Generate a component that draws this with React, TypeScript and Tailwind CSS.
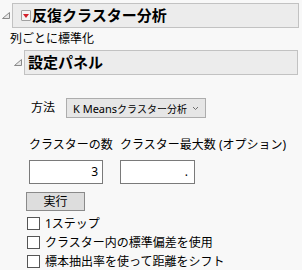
import React from "react";

function Disclosure({ className }: { className?: string }) {
  // gray outline triangle, right angle bottom-right
  return (
    <svg width="8" height="7" viewBox="0 0 8 7" className={className}>
      <path d="M0.5 6.5 L7.5 6.5 L7.5 0.5 Z" fill="#e8e8e8" stroke="#8a8a8a" strokeWidth="1" />
    </svg>
  );
}

function RedMenu() {
  return (
    <div className="flex h-[11px] w-[10px] items-center justify-center rounded-[1px] border border-[#a0a0a0] bg-[#f4f4f4]">
      <svg width="6" height="4" viewBox="0 0 6 4">
        <path d="M0 0 L6 0 L3 4 Z" fill="#d3202a" />
      </svg>
    </div>
  );
}

function Check({ label }: { label: string }) {
  return (
    <div className="flex h-[19px] items-center pl-[27px]">
      <span className="h-[13px] w-[13px] border border-[#555] bg-white" />
      <span className="ml-[5px] whitespace-nowrap text-[12px] leading-none">{label}</span>
    </div>
  );
}

export default function App() {
  return (
    <div className="h-[270px] w-[302px] overflow-hidden bg-[#f8f8f8] font-['Noto_Sans','Noto_Sans_CJK_JP',sans-serif] text-black">
      {/* top-level report header */}
      <div className="mt-[3px] flex h-[25px] items-center">
        <Disclosure className="ml-[2px]" />
        <div className="ml-[2px] flex h-full w-[287px] items-center border border-[#c2c2c2] bg-[#ececec] pl-[8px]">
          <RedMenu />
          <span className="ml-[1px] whitespace-nowrap text-[15px] font-bold leading-none">反復クラスター分析</span>
        </div>
      </div>

      <div className="flex h-[22px] items-center pl-[10px] text-[12px] leading-none">列ごとに標準化</div>

      {/* settings panel */}
      <div className="flex h-[25px] items-center">
        <Disclosure className="ml-[14px]" />
        <div className="ml-[2px] flex h-full w-[274px] items-center border border-[#c2c2c2] bg-[#ececec] pl-[3px]">
          <span className="text-[15px] font-bold leading-none">設定パネル</span>
        </div>
      </div>

      <div className="mt-[23px] flex h-[20px] items-center pl-[31px]">
        <span className="w-[35px] text-[12px] leading-none">方法</span>
        <div className="flex h-full w-[140px] items-center border border-[#adadad] bg-[#e6e6e6] pl-[6px]">
          <span className="whitespace-nowrap text-[11px] leading-none">
            K Means<span className="text-[10px]">クラスター分析</span>
          </span>
          <svg width="7" height="5" viewBox="0 0 7 5" className="ml-auto mr-[6px] shrink-0">
            <path d="M1 1 L3.5 3.5 L6 1" fill="none" stroke="#707070" strokeWidth="1" />
          </svg>
        </div>
      </div>

      <div className="mt-[20px] flex h-[14px] items-center whitespace-nowrap pl-[29px] text-[12px] leading-none">
        <span className="w-[91px]">クラスターの数</span>
        <span>クラスター最大数 (オプション)</span>
      </div>

      <div className="mt-[8px] flex pl-[29px]">
        <div className="flex h-[24px] w-[74px] items-center justify-end border border-[#7a7a7a] bg-white pr-[4px] text-[12px] leading-none">
          3
        </div>
        <div className="ml-[17px] flex h-[24px] w-[75px] items-center justify-end border border-[#7a7a7a] bg-white pr-[6px] text-[12px] leading-none">
          .
        </div>
      </div>

      <div className="mt-[8px] pl-[26px]">
        <div className="flex h-[19px] w-[59px] items-center justify-center border border-[#8a8a8a] bg-[#dddddd] text-[12px] leading-none">
          実行
        </div>
      </div>

      <div className="mt-[3px]">
        <Check label="1ステップ" />
        <Check label="クラスター内の標準偏差を使用" />
        <Check label="標本抽出率を使って距離をシフト" />
      </div>
    </div>
  );
}
